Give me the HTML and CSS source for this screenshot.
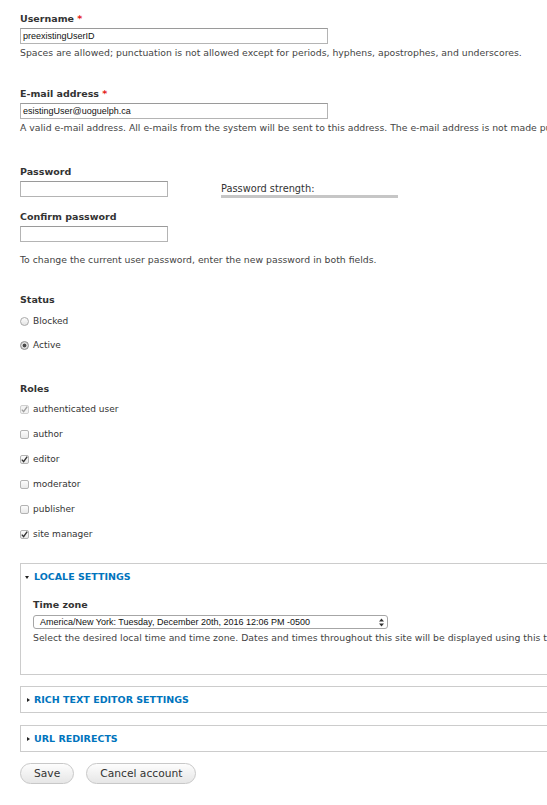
FILE: index.html
```html
<!DOCTYPE html>
<html lang="en">
<head>
<meta charset="utf-8">
<title>Edit account</title>
<link rel="stylesheet" href="styles.css">
</head>
<body>
<form class="page">
  <div class="field">
    <div class="label">Username <span class="req">*</span></div>
    <input class="text wide" type="text" value="preexistingUserID">
    <div class="desc">Spaces are allowed; punctuation is not allowed except for periods, hyphens, apostrophes, and underscores.</div>
  </div>

  <div class="field f-email">
    <div class="label">E-mail address <span class="req">*</span></div>
    <input class="text wide" type="text" value="esistingUser@uoguelph.ca">
    <div class="desc">A valid e-mail address. All e-mails from the system will be sent to this address. The e-mail address is not made public and will only be used if you wish to receive a new password.</div>
  </div>

  <div class="field f-pass">
    <div class="label">Password</div>
    <div class="pw-row">
      <input class="text short" type="password">
      <div class="strength">
        <div class="strength-label">Password strength:</div>
        <div class="strength-bar"></div>
      </div>
    </div>
  </div>

  <div class="field f-confirm">
    <div class="label">Confirm password</div>
    <input class="text short" type="password">
  </div>
  <div class="desc desc-pass">To change the current user password, enter the new password in both fields.</div>

  <div class="field f-status">
    <div class="label">Status</div>
    <div class="opt opt-first"><span class="radio"></span>Blocked</div>
    <div class="opt opt-radio"><span class="radio on"></span>Active</div>
  </div>

  <div class="field f-roles">
    <div class="label">Roles</div>
    <div class="opt opt-first-cb"><span class="check disabled"><svg viewBox="0 0 9 9" width="9" height="9"><path d="M1.8 4.6 L3.6 6.6 L7.2 1.6" fill="none" stroke="#a0a0a0" stroke-width="1.4"/></svg></span><span class="muted">authenticated user</span></div>
    <div class="opt opt-cb"><span class="check"></span>author</div>
    <div class="opt opt-cb"><span class="check"><svg viewBox="0 0 9 9" width="9" height="9"><path d="M1.8 4.6 L3.6 6.6 L7.2 1.6" fill="none" stroke="#333" stroke-width="1.4"/></svg></span>editor</div>
    <div class="opt opt-cb"><span class="check"></span>moderator</div>
    <div class="opt opt-cb"><span class="check"></span>publisher</div>
    <div class="opt opt-cb"><span class="check"><svg viewBox="0 0 9 9" width="9" height="9"><path d="M1.8 4.6 L3.6 6.6 L7.2 1.6" fill="none" stroke="#333" stroke-width="1.4"/></svg></span>site manager</div>
  </div>

  <div class="panel panel-locale">
    <div class="panel-title"><span class="tri-down"></span>Locale settings</div>
    <div class="panel-body">
      <div class="label">Time zone</div>
      <div class="select">
        <span>America/New York: Tuesday, December 20th, 2016 12:06 PM -0500</span>
        <svg class="arrows" viewBox="0 0 5 9" width="5" height="9"><path d="M0 3.6 L2.5 0.6 L5 3.6 Z M0 5.4 L2.5 8.4 L5 5.4 Z" fill="#333"/></svg>
      </div>
      <div class="desc">Select the desired local time and time zone. Dates and times throughout this site will be displayed using this time zone.</div>
    </div>
  </div>

  <div class="panel panel-rich">
    <div class="panel-title"><span class="tri-right"></span>Rich text editor settings</div>
  </div>

  <div class="panel panel-url">
    <div class="panel-title"><span class="tri-right"></span>URL redirects</div>
  </div>

  <div class="actions">
    <button class="btn" type="button">Save</button>
    <button class="btn" type="button">Cancel account</button>
  </div>
</form>
</body>
</html>
```

FILE: styles.css
```css
html, body {
  margin: 0;
  padding: 0;
  background: #fff;
  overflow-x: hidden;
}

body {
  font-family: "DejaVu Sans", Verdana, sans-serif;
  color: #333;
}

.page {
  width: 900px;
  padding: 13px 0 0 20px;
  margin: 0;
}

.label {
  font-weight: bold;
  font-size: 9.5px;
  line-height: 12px;
  color: #333;
  white-space: nowrap;
}

.req {
  color: #e41b17;
}

.text {
  display: block;
  box-sizing: border-box;
  height: 16px;
  margin: 3px 0 0 0;
  padding: 0 2px;
  border: 1px solid #b4b4b4;
  border-top-color: #9a9a9a;
  border-radius: 0;
  background: #fff;
  font-family: "Liberation Sans", Arial, sans-serif;
  font-size: 9px;
  color: #111;
  outline: none;
}

.wide { width: 308px; }
.short { width: 148px; }

.desc {
  font-size: 9.3px;
  line-height: 12px;
  color: #444;
  margin-top: 3px;
  white-space: nowrap;
}

.f-email { margin-top: 29px; }
.f-pass { margin-top: 32px; }
.f-confirm { margin-top: 13px; }
.desc-pass { margin-top: 12px; }
.f-status { margin-top: 28px; }
.f-roles { margin-top: 32px; }

.pw-row {
  display: flex;
  align-items: flex-start;
  margin-top: 3px;
}

.pw-row .text { margin-top: 0; }

.strength {
  margin-left: 53px;
  margin-top: 2px;
  width: 177px;
}

.strength-label {
  font-size: 9.8px;
  line-height: 11px;
  color: #333;
  white-space: nowrap;
}

.strength-bar {
  height: 3px;
  margin-top: 1px;
  background: #c6c6c6;
}

.opt {
  display: flex;
  align-items: center;
  height: 12px;
  font-size: 9px;
  line-height: 12px;
  color: #333;
  white-space: nowrap;
}

.opt-first { margin-top: 9px; }
.opt-radio { margin-top: 12px; }
.opt-first-cb { margin-top: 8px; }
.opt-cb { margin-top: 13px; }

.radio,
.check {
  display: block;
  box-sizing: border-box;
  width: 9px;
  height: 9px;
  margin-right: 4px;
  flex: none;
}

.radio {
  border: 1px solid #a9a9a9;
  border-radius: 50%;
  background: linear-gradient(#fdfdfd, #e4e4e4);
}

.radio.on {
  border-color: #8c8c8c;
  background: radial-gradient(circle, #4a4a4a 0 1.6px, #d9d9d9 2.2px);
}

.check {
  position: relative;
  border: 1px solid #b3b3b3;
  border-radius: 2px;
  background: linear-gradient(#fcfcfc, #e9e9e9);
}

.check svg {
  position: absolute;
  left: -1px;
  top: -1px;
}

.check.disabled {
  border-color: #cfcfcf;
  background: #f3f3f3;
}

.muted { color: #333; }

.panel {
  border: 1px solid #ccc;
  margin-top: 11px;
}

.panel-locale { margin-top: 23px; }
.panel-url { margin-top: 12px; }

.panel-title {
  display: flex;
  align-items: center;
  height: 12px;
  padding: 7px 0 6px 4px;
  font-size: 9.5px;
  line-height: 12px;
  font-weight: bold;
  color: #0074bd;
  text-transform: uppercase;
  white-space: nowrap;
}

.tri-down {
  width: 0;
  height: 0;
  border-left: 2px solid transparent;
  border-right: 2px solid transparent;
  border-top: 3px solid #222;
  margin: 1px 5px 0 0;
}

.tri-right {
  width: 0;
  height: 0;
  border-top: 2px solid transparent;
  border-bottom: 2px solid transparent;
  border-left: 3px solid #222;
  margin: 0 4px 0 2px;
}

.panel-body {
  padding: 10px 12px 30px 12px;
}

.select {
  display: flex;
  align-items: center;
  justify-content: space-between;
  box-sizing: border-box;
  width: 355px;
  height: 14px;
  margin-top: 4px;
  padding: 0 3px 0 6px;
  border: 1px solid #a6a6a6;
  border-radius: 3px;
  background: #fff;
  font-family: "Liberation Sans", Arial, sans-serif;
  font-size: 9px;
  color: #111;
  white-space: nowrap;
}

.arrows { flex: none; }

.actions {
  display: flex;
  gap: 12px;
  margin-top: 11px;
}

.btn {
  box-sizing: border-box;
  height: 21px;
  padding: 0 13px;
  border: 1px solid #c8c8c8;
  border-radius: 11px;
  background: linear-gradient(#fdfdfd, #e6e6e6);
  font-family: "DejaVu Sans", Verdana, sans-serif;
  font-size: 10.7px;
  color: #333;
  cursor: pointer;
}
```
